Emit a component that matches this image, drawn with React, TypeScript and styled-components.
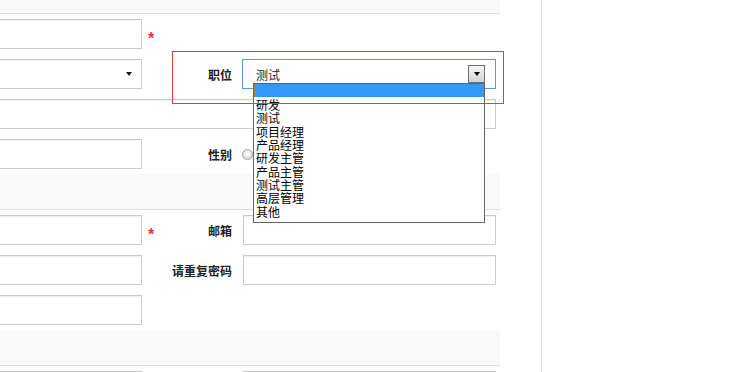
import React from "react";
import styled, { createGlobalStyle } from "styled-components";

const GlobalStyle = createGlobalStyle`
  html, body {
    margin: 0;
    padding: 0;
    background: #ffffff;
    overflow: hidden;
  }
  body {
    font-family: "Noto Sans CJK SC", "Liberation Sans", sans-serif;
    font-size: 12px;
    color: #333;
  }
`;

const Page = styled.div`
  display: flex;
  height: 100vh;
  overflow: hidden;
`;

const Form = styled.div`
  flex: none;
  width: 540px;
  margin-left: -40px;
  display: flex;
  flex-direction: column;
`;

const Divider = styled.div`
  flex: none;
  width: 1px;
  margin-left: 41px;
  background: #dddddd;
`;

const Band = styled.div<{ $h: number }>`
  flex: none;
  height: ${(p) => p.$h}px;
  box-sizing: border-box;
  background: #f9f9f9;
  border-bottom: 1px solid #dddddd;
`;

const Row = styled.div`
  flex: none;
  display: grid;
  grid-template-columns: 182px 30px 71px 253px 4px;
  height: 40px;
  align-items: center;
  position: relative;
`;

const TextInput = styled.div<{ $wide?: boolean }>`
  grid-column: ${(p) => (p.$wide ? "1 / 5" : "auto")};
  height: 30px;
  box-sizing: border-box;
  border: 1px solid #cccccc;
  box-shadow: inset 0 1px 1px rgba(0, 0, 0, 0.06);
  background: #fff;
`;

const SelectLike = styled.div`
  height: 30px;
  box-sizing: border-box;
  border: 1px solid #cccccc;
  box-shadow: inset 0 1px 1px rgba(0, 0, 0, 0.06);
  display: flex;
  align-items: center;
  justify-content: flex-end;
  padding-right: 9px;
`;

const Caret = styled.span`
  width: 0;
  height: 0;
  border-top: 4px solid #1a1a1a;
  border-left: 3.5px solid transparent;
  border-right: 3.5px solid transparent;
`;

const Star = styled.span`
  align-self: start;
  margin-top: 17px;
  padding-left: 6px;
  color: #e4393c;
  font-family: "Liberation Sans", sans-serif;
  font-weight: bold;
  font-size: 16px;
  line-height: 1;
`;

const Empty = styled.span``;

const Label = styled.span`
  grid-column: 3;
  text-align: right;
  padding-right: 11px;
  font-weight: bold;
  font-size: 12px;
  color: #222;
  white-space: nowrap;
`;

const FieldGroup = styled.div`
  grid-column: 3 / 5;
  display: grid;
  grid-template-columns: 71px 253px;
  align-items: center;
  height: 40px;
  position: relative;

  &::after {
    content: "";
    position: absolute;
    top: -3px;
    left: 0;
    right: -8px;
    bottom: -10px;
    border: 1px solid #e83a3a;
    z-index: 20;
    pointer-events: none;
  }
`;

const GroupLabel = styled(Label)`
  grid-column: 1;
`;

const SelectBox = styled.div`
  position: relative;
  height: 30px;
  width: 254px;
  margin-left: -1px;
  box-sizing: border-box;
  border: 1px solid #5b93f3;
  display: flex;
  align-items: center;
  padding-left: 13px;
  color: #222;
  font-size: 12px;
  z-index: 5;
`;

const DropButton = styled.span`
  position: absolute;
  right: 10px;
  top: 5px;
  width: 17px;
  height: 18px;
  box-sizing: border-box;
  border: 1px solid #707070;
  background: linear-gradient(#f6f6f6, #d2d2d2);
  display: flex;
  align-items: center;
  justify-content: center;

  &::before {
    content: "";
    width: 0;
    height: 0;
    border-top: 4px solid #000;
    border-left: 3.5px solid transparent;
    border-right: 3.5px solid transparent;
  }
`;

const DropList = styled.div`
  position: absolute;
  left: 10px;
  top: 23px;
  width: 232px;
  box-sizing: border-box;
  border: 1px solid #646464;
  background: #fff;
  padding-bottom: 5px;
  z-index: 10;
`;

const Option = styled.div<{ $active?: boolean }>`
  height: ${(p) => (p.$active ? "13px" : "13.33px")};
  box-sizing: border-box;
  line-height: 13.33px;
  padding-left: 1px;
  font-size: 12px;
  color: #000;
  white-space: nowrap;
  background: ${(p) => (p.$active ? "#3399ff" : "transparent")};
  border: 1px ${(p) => (p.$active ? "dotted #b0762f" : "solid transparent")};
`;

const RadioGroup = styled.div`
  display: flex;
  align-items: center;
  gap: 20px;
  margin-left: -1px;
`;

const Radio = styled.span`
  width: 11px;
  height: 11px;
  box-sizing: border-box;
  border-radius: 50%;
  border: 1px solid #a0a0a0;
  background: radial-gradient(circle at 50% 40%, #ffffff 0%, #e6e6e6 55%, #c8c8c8 100%);
`;

const options = [
  "研发",
  "测试",
  "项目经理",
  "产品经理",
  "研发主管",
  "产品主管",
  "测试主管",
  "高层管理",
  "其他",
];

export default function App() {
  return (
    <>
      <GlobalStyle />
      <Page>
        <Form>
          <Band $h={14} />
          <Row>
            <TextInput />
            <Star>*</Star>
          </Row>
          <Row>
            <SelectLike>
              <Caret />
            </SelectLike>
            <Empty />
            <FieldGroup>
              <GroupLabel>职位</GroupLabel>
              <SelectBox>
                测试
                <DropButton />
                <DropList>
                  <Option $active>&nbsp;</Option>
                  {options.map((o) => (
                    <Option key={o}>{o}</Option>
                  ))}
                </DropList>
              </SelectBox>
            </FieldGroup>
          </Row>
          <Row>
            <TextInput $wide />
          </Row>
          <Row>
            <TextInput />
            <Empty />
            <Label>性别</Label>
            <RadioGroup>
              <Radio />
              <Radio />
            </RadioGroup>
          </Row>
          <Band $h={36} />
          <Row>
            <TextInput />
            <Star>*</Star>
            <Label>邮箱</Label>
            <TextInput />
          </Row>
          <Row>
            <TextInput />
            <Empty />
            <Label>请重复密码</Label>
            <TextInput />
          </Row>
          <Row>
            <TextInput />
          </Row>
          <Band $h={36} />
          <Row>
            <TextInput />
            <Empty />
            <Label />
            <TextInput />
          </Row>
        </Form>
        <Divider />
      </Page>
    </>
  );
}
